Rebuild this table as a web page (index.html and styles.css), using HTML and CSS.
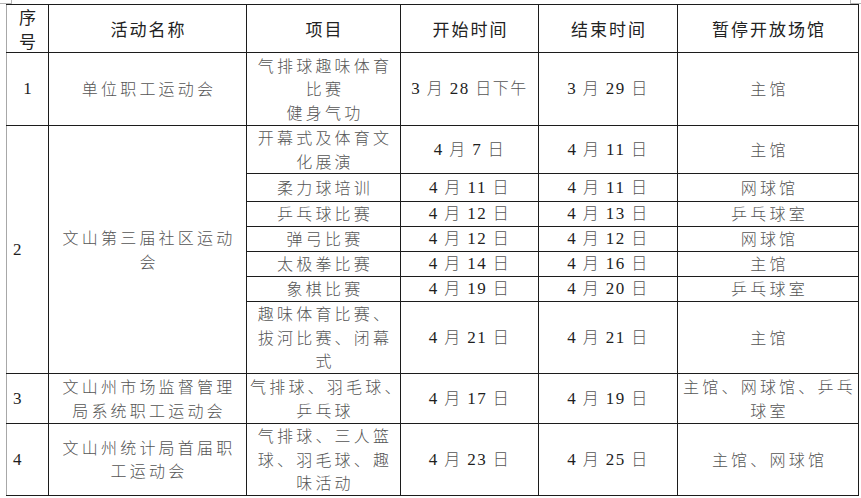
FILE: index.html
```html
<!DOCTYPE html>
<html lang="zh-CN">
<head>
<meta charset="utf-8">
<title>暂停开放场馆安排</title>
<link rel="stylesheet" href="styles.css">
</head>
<body>
<div class="page">
  <span class="mark mark-l"></span>
  <span class="mark mark-r"></span>
  <table class="sched">
    <colgroup>
      <col class="c-no"><col class="c-name"><col class="c-item"><col class="c-start"><col class="c-end"><col class="c-venue">
    </colgroup>
    <thead>
      <tr class="h-47">
        <th class="edge">序<br>号</th>
        <th>活动名称</th>
        <th>项目</th>
        <th>开始时间</th>
        <th>结束时间</th>
        <th>暂停开放场馆</th>
      </tr>
    </thead>
    <tbody>
      <tr class="h-73">
        <td class="no edge mid">1</td>
        <td class="txt">单位职工运动会</td>
        <td class="txt">气排球趣味体育<br>比赛<br>健身气功</td>
        <td class="date"><span class="n">3</span> 月 <span class="n">28</span> 日下午</td>
        <td class="date"><span class="n">3</span> 月 <span class="n">29</span> 日</td>
        <td class="txt">主馆</td>
      </tr>
      <tr class="h-48">
        <td class="no edge" rowspan="7">2</td>
        <td class="txt" rowspan="7">文山第三届社区运动<br>会</td>
        <td class="txt">开幕式及体育文<br>化展演</td>
        <td class="date"><span class="n">4</span> 月 <span class="n">7</span> 日</td>
        <td class="date"><span class="n">4</span> 月 <span class="n">11</span> 日</td>
        <td class="txt">主馆</td>
      </tr>
      <tr class="h-28">
        <td class="txt">柔力球培训</td>
        <td class="date"><span class="n">4</span> 月 <span class="n">11</span> 日</td>
        <td class="date"><span class="n">4</span> 月 <span class="n">11</span> 日</td>
        <td class="txt">网球馆</td>
      </tr>
      <tr class="h-25">
        <td class="txt">乒乓球比赛</td>
        <td class="date"><span class="n">4</span> 月 <span class="n">12</span> 日</td>
        <td class="date"><span class="n">4</span> 月 <span class="n">13</span> 日</td>
        <td class="txt">乒乓球室</td>
      </tr>
      <tr class="h-25">
        <td class="txt">弹弓比赛</td>
        <td class="date"><span class="n">4</span> 月 <span class="n">12</span> 日</td>
        <td class="date"><span class="n">4</span> 月 <span class="n">12</span> 日</td>
        <td class="txt">网球馆</td>
      </tr>
      <tr class="h-25">
        <td class="txt">太极拳比赛</td>
        <td class="date"><span class="n">4</span> 月 <span class="n">14</span> 日</td>
        <td class="date"><span class="n">4</span> 月 <span class="n">16</span> 日</td>
        <td class="txt">主馆</td>
      </tr>
      <tr class="h-25">
        <td class="txt">象棋比赛</td>
        <td class="date"><span class="n">4</span> 月 <span class="n">19</span> 日</td>
        <td class="date"><span class="n">4</span> 月 <span class="n">20</span> 日</td>
        <td class="txt">乒乓球室</td>
      </tr>
      <tr class="h-72">
        <td class="txt">趣味体育比赛、<br>拔河比赛、闭幕<br>式</td>
        <td class="date"><span class="n">4</span> 月 <span class="n">21</span> 日</td>
        <td class="date"><span class="n">4</span> 月 <span class="n">21</span> 日</td>
        <td class="txt">主馆</td>
      </tr>
      <tr class="h-50">
        <td class="no edge">3</td>
        <td class="txt">文山州市场监督管理<br>局系统职工运动会</td>
        <td class="txt">气排球、羽毛球、<br>乒乓球</td>
        <td class="date"><span class="n">4</span> 月 <span class="n">17</span> 日</td>
        <td class="date"><span class="n">4</span> 月 <span class="n">19</span> 日</td>
        <td class="txt">主馆、网球馆、乒乓<br>球室</td>
      </tr>
      <tr class="h-71">
        <td class="no edge">4</td>
        <td class="txt">文山州统计局首届职<br>工运动会</td>
        <td class="txt">气排球、三人篮<br>球、羽毛球、趣<br>味活动</td>
        <td class="date"><span class="n">4</span> 月 <span class="n">23</span> 日</td>
        <td class="date"><span class="n">4</span> 月 <span class="n">25</span> 日</td>
        <td class="txt">主馆、网球馆</td>
      </tr>
    </tbody>
  </table>
</div>
</body>
</html>
```
FILE: styles.css
```css
html, body {
  margin: 0;
  background: #ffffff;
}

body {
  font-family: "Liberation Serif", "Noto Sans CJK SC", serif;
}

.page {
  position: relative;
  padding: 4px 0 0 6px;
}

.mark {
  position: absolute;
  top: 0;
  width: 11px;
  height: 3px;
  border-bottom: 1px solid #b5b5b5;
}

.mark-l {
  left: 0;
  border-right: 1px solid #b5b5b5;
}

.mark-r {
  left: 850px;
  border-left: 1px solid #b5b5b5;
}

.sched {
  border-collapse: collapse;
  table-layout: fixed;
  width: 852px;
}

.c-no { width: 42px; }
.c-name { width: 198px; }
.c-item { width: 154px; }
.c-start { width: 138px; }
.c-end { width: 139px; }
.c-venue { width: 181px; }

.sched th,
.sched td {
  border: 1px solid #1c1c1c;
  padding: 0;
  text-align: center;
  vertical-align: middle;
  white-space: nowrap;
  line-height: 23.5px;
}

.sched .edge {
  border-left-color: #a8a8a8;
}

.sched th {
  font-family: "Noto Sans CJK SC", sans-serif;
  font-weight: 400;
  font-size: 17px;
  color: #222222;
  letter-spacing: 2px;
  padding-left: 2px;
}

.sched .txt {
  font-family: "Noto Sans CJK SC", sans-serif;
  font-weight: 300;
  font-size: 16px;
  color: #555555;
  letter-spacing: 3.2px;
  padding-left: 3px;
}

.sched .date {
  font-family: "Liberation Serif", "Noto Sans CJK SC", serif;
  font-size: 16px;
  font-weight: 300;
  color: #555555;
  letter-spacing: 1.5px;
}

.sched .n {
  font-weight: 400;
  font-size: 17px;
  color: #1e1e1e;
}

.sched .no {
  font-family: "Liberation Serif", serif;
  font-size: 17px;
  color: #1e1e1e;
  text-align: left;
  padding-left: 6px;
}

.sched .no.mid {
  text-align: center;
  padding-left: 0;
}

.h-47 { height: 47px; }
.h-73 { height: 73px; }
.h-48 { height: 48px; }
.h-28 { height: 28px; }
.h-25 { height: 25px; }
.h-72 { height: 72px; }
.h-50 { height: 50px; }
.h-71 { height: 71px; }
```
